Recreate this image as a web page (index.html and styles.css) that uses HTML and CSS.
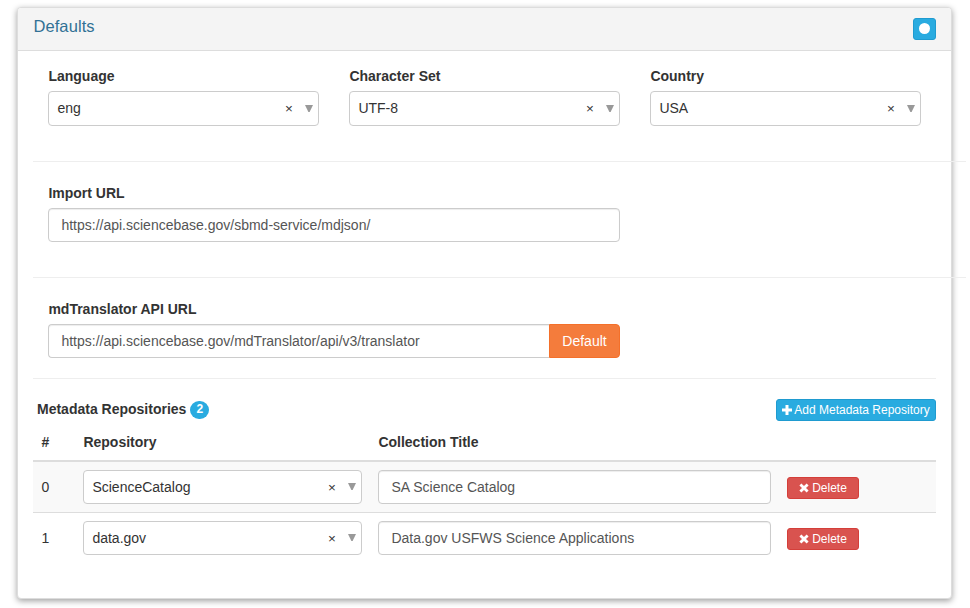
FILE: index.html
```html
<!DOCTYPE html>
<html lang="en">
<head>
<meta charset="utf-8">
<title>Defaults</title>
<link rel="stylesheet" href="styles.css">
</head>
<body>
<section class="panel">
  <header class="panel-heading">
    <h3 class="panel-title">Defaults</h3>
    <button class="btn btn-info btn-toggle" aria-label="Toggle"><span class="dot"></span></button>
  </header>
  <div class="panel-body">
    <div class="row">
      <div class="field"><label>Language</label>
        <div class="select"><span class="value">eng</span><span class="clear">×</span><svg class="arrow" viewBox="0 0 8 7"><path d="M0 0h8L4.6 7H3.4z"/></svg></div></div>
      <div class="field"><label>Character Set</label>
        <div class="select"><span class="value">UTF-8</span><span class="clear">×</span><svg class="arrow" viewBox="0 0 8 7"><path d="M0 0h8L4.6 7H3.4z"/></svg></div></div>
      <div class="field"><label>Country</label>
        <div class="select"><span class="value">USA</span><span class="clear">×</span><svg class="arrow" viewBox="0 0 8 7"><path d="M0 0h8L4.6 7H3.4z"/></svg></div></div>
    </div>
    <hr class="wide">
    <div class="field single"><label>Import URL</label>
      <div class="input">https://api.sciencebase.gov/sbmd-service/mdjson/</div></div>
    <hr class="wide">
    <div class="field single"><label>mdTranslator API URL</label>
      <div class="input-group"><div class="input">https://api.sciencebase.gov/mdTranslator/api/v3/translator</div><button class="btn btn-default">Default</button></div></div>
    <hr class="section">
    <div class="repo-bar">
      <span class="repo-title">Metadata Repositories</span><span class="badge">2</span>
      <button class="btn btn-info btn-xs btn-add"><svg class="plus" viewBox="0 0 10 10"><path d="M3.5 0h3v3.5H10v3H6.5V10h-3V6.5H0v-3h3.5z"/></svg><span class="add-text">Add Metadata Repository</span></button>
    </div>
    <div class="table">
      <div class="tr head"><span>#</span><span>Repository</span><span>Collection Title</span></div>
      <div class="tr odd"><span>0</span>
        <div class="select"><span class="value">ScienceCatalog</span><span class="clear">×</span><svg class="arrow" viewBox="0 0 8 7"><path d="M0 0h8L4.6 7H3.4z"/></svg></div>
        <div class="input">SA Science Catalog</div>
        <button class="btn btn-danger btn-xs"><svg class="cross" viewBox="0 0 10 10"><path d="M2.4 .4 5 3 7.6 .4 9.6 2.4 7 5l2.6 2.6-2 2L5 7 2.4 9.6l-2-2L3 5 .4 2.4z"/></svg>Delete</button></div>
      <div class="tr"><span>1</span>
        <div class="select"><span class="value">data.gov</span><span class="clear">×</span><svg class="arrow" viewBox="0 0 8 7"><path d="M0 0h8L4.6 7H3.4z"/></svg></div>
        <div class="input">Data.gov USFWS Science Applications</div>
        <button class="btn btn-danger btn-xs"><svg class="cross" viewBox="0 0 10 10"><path d="M2.4 .4 5 3 7.6 .4 9.6 2.4 7 5l2.6 2.6-2 2L5 7 2.4 9.6l-2-2L3 5 .4 2.4z"/></svg>Delete</button></div>
    </div>
  </div>
</section>
</body>
</html>
```
FILE: styles.css
```css
* { box-sizing: border-box; }
html, body { height: 100%; overflow: hidden; }
body {
  margin: 0;
  padding: 7px 0 0 17px;
  background: #fff;
  color: #333;
  font: 14px/20px "Liberation Sans", Arial, sans-serif;
}
.panel {
  width: 935px;
  height: 592px;
  border: 1px solid #ddd;
  border-radius: 4px;
  background: #fff;
  box-shadow: 0 2px 6px rgba(0, 0, 0, .38);
}
.panel-heading {
  display: flex;
  justify-content: space-between;
  height: 43px;
  padding: 10px 15px;
  border-bottom: 1px solid #ddd;
  border-radius: 3px 3px 0 0;
  background: #f4f4f4;
}
.panel-title {
  margin: 0;
  padding-left: .4px;
  color: #317195;
  font-size: 16.5px;
  font-weight: 400;
  line-height: 16px;
  letter-spacing: .1px;
}
.panel-body { padding: 15px; }
.row {
  display: grid;
  grid-template-columns: repeat(3, 271px);
  gap: 30px;
  padding-left: 15px;
}
.field label {
  display: block;
  height: 20px;
  margin-bottom: 5px;
  padding-left: .4px;
  font-weight: 700;
}
.single { width: 587px; padding-left: 15px; }
.select, .input {
  height: 34px;
  border: 1px solid #ccc;
  border-radius: 4px;
  background: #fff;
}
.select {
  display: flex;
  align-items: flex-start;
  padding: 6px 5px 0 8.4px;
}
.row .select { height: 35px; }
.value { flex: 1; }
.clear { margin-right: 12px; padding-top: 1px; font-size: 13.5px; line-height: 20px; }
.row .clear { padding-top: 1px; }
.arrow { width: 8px; height: 7px; margin-top: 6px; fill: #999; }
.row .arrow { margin-top: 7px; }
.input {
  padding: 6px 12.4px;
  color: #555;
  box-shadow: inset 0 1px 1px rgba(0, 0, 0, .075);
}
.input-group { display: flex; }
.input-group .input { flex: 1; border-right: 0; border-radius: 4px 0 0 4px; }
hr { margin: 35px 0 21px; border: 0; border-top: 1px solid #eee; }
.wide { width: 933px; }
.section { margin: 20px 0; }
.btn {
  display: flex;
  align-items: center;
  justify-content: center;
  margin: 0;
  padding: 0;
  border: 1px solid;
  border-radius: 3px;
  color: #fff;
  font: inherit;
}
.btn-info { border-color: #1f9bd0; background: #29abe0; }
.btn-toggle { width: 23px; height: 22px; padding-bottom: 1px; }
.dot { width: 11px; height: 11px; border-radius: 50%; background: #fff; }
.btn-default {
  width: 71px;
  border-color: #f4702a;
  border-radius: 0 4px 4px 0;
  background: #f47c3c;
}
.btn-xs { height: 22px; font-size: 12px; line-height: 18px; }
.btn-danger { width: 72px; border-color: #d43f3a; background: #d9534f; }
.btn-add { width: 160px; margin-left: auto; }
.plus { width: 10px; height: 10px; margin: 0 2px 1px 0; fill: #fff; }
.cross { width: 10px; height: 10px; margin-right: 3px; fill: #fff; }
.repo-bar { display: flex; height: 22px; padding-left: 4px; }
.repo-title { font-weight: 700; }
.badge {
  width: 19px;
  height: 18px;
  margin: 2px 0 0 4px;
  border-radius: 10px;
  background: #29abe0;
  color: #fff;
  font-size: 12px;
  font-weight: 700;
  line-height: 17px;
  text-align: center;
}
.tr {
  display: grid;
  grid-template-columns: 26px 279px 393px 72px;
  column-gap: 16px;
  align-items: center;
  height: 51px;
  padding-left: 8px;
  border-top: 1px solid #ddd;
}
.tr > span { padding-left: .4px; }
.head { height: 39px; padding-top: 2px; border: 0; font-weight: 700; }
.head + .tr { height: 52px; border-top-width: 2px; }
.odd { background: #f9f9f9; }
.tr .btn { margin-top: 2px; }
```
